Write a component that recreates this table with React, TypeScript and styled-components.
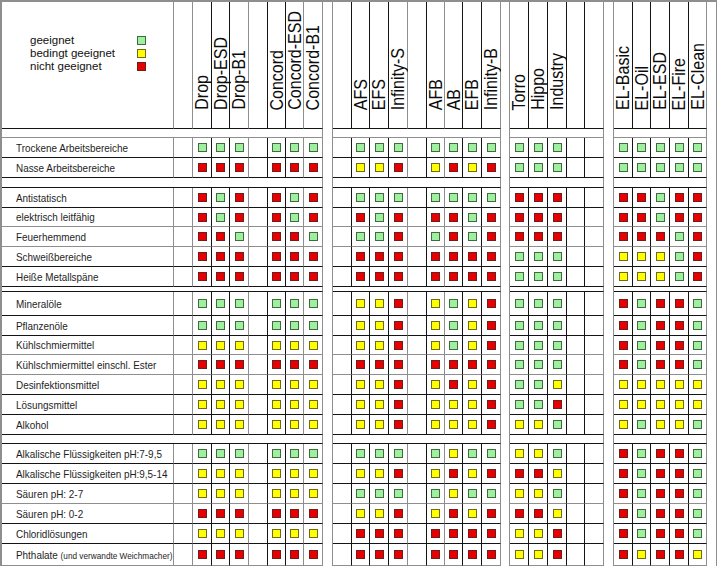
import React from 'react';
import styled, { createGlobalStyle } from 'styled-components';

type Mark = 'G' | 'Y' | 'R';

const GRAY = '#8e8e8e';
const INK = '#141414';

const MARK_STYLE: Record<Mark, { fill: string; edge: string }> = {
  G: { fill: '#9ef09e', edge: '#3f6b3f' },
  Y: { fill: '#ffff00', edge: '#6d6a1c' },
  R: { fill: '#e80000', edge: '#6b1f1f' },
};

const GlobalStyle = createGlobalStyle`
  html, body {
    margin: 0;
    padding: 0;
    background: #ffffff;
  }
  body {
    font-family: "Liberation Sans", Arial, sans-serif;
    color: ${INK};
  }
`;

const Sheet = styled.div<{ $cols: string; $rows: string }>`
  display: grid;
  grid-template-columns: ${(p) => p.$cols};
  grid-template-rows: ${(p) => p.$rows};
  width: max-content;
  border-top: 2px solid ${GRAY};
  border-left: 2px solid ${GRAY};
  background: #ffffff;
`;

const Gap = styled.div<{ $col: number }>`
  grid-column: ${(p) => p.$col};
  grid-row: 1 / -1;
  box-sizing: border-box;
  border-right: 1px solid ${GRAY};
`;

const Cell = styled.div<{ $right: string; $bottom: string }>`
  box-sizing: border-box;
  min-width: 0;
  min-height: 0;
  display: flex;
  align-items: center;
  justify-content: center;
  border-right: 1px solid ${(p) => p.$right};
  border-bottom: 1px solid ${(p) => p.$bottom};
`;

const SpacerCell = styled(Cell)<{ $span: number }>`
  grid-column: span ${(p) => p.$span};
`;

const HeaderCell = styled(Cell)`
  flex-direction: column;
  justify-content: flex-end;
  padding-bottom: 18px;
`;

const VerticalLabel = styled.span`
  writing-mode: vertical-rl;
  transform: rotate(180deg) scaleX(1.2);
  font-size: 16px;
  line-height: 16px;
  white-space: nowrap;
  color: #0c0c0c;
`;

const LegendCell = styled(Cell)`
  align-items: flex-start;
  justify-content: flex-start;
  padding: 32px 0 0 28px;
`;

const Legend = styled.div`
  display: grid;
  grid-template-columns: 107px 9px;
  grid-auto-rows: 13px;
  align-items: center;
  font-size: 11.5px;
  line-height: 13px;
  color: #111;
`;

const LegendText = styled.span`
  white-space: nowrap;
`;

const LabelCell = styled(Cell)`
  justify-content: flex-start;
  padding-left: 14px;
  font-size: 10.6px;
  color: #1e1e1e;
  white-space: nowrap;
`;

const LabelText = styled.span`
  display: inline-block;
  transform: scaleX(0.935);
  transform-origin: left center;
`;

const Aside = styled.span`
  font-size: 8.8px;
`;

const Swatch = styled.span<{ $mark: Mark }>`
  display: block;
  width: 9px;
  height: 9px;
  box-sizing: border-box;
  background: ${(p) => MARK_STYLE[p.$mark].fill};
  border: 1px solid ${(p) => MARK_STYLE[p.$mark].edge};
`;

type ColKind = 'label' | 'blank' | 'data' | 'gap';
interface Column {
  kind: ColKind;
  width: number;
  name?: string;
  soft?: boolean;
}

const columns: Column[] = [
  { kind: 'label', width: 172, soft: true },
  { kind: 'blank', width: 19, soft: true },
  { kind: 'data', width: 19, name: 'Drop' },
  { kind: 'data', width: 18, name: 'Drop-ESD' },
  { kind: 'data', width: 19, name: 'Drop-B1', soft: true },
  { kind: 'blank', width: 19 },
  { kind: 'data', width: 18, name: 'Concord' },
  { kind: 'data', width: 18, name: 'Concord-ESD', soft: true },
  { kind: 'data', width: 19, name: 'Concord-B1', soft: true },
  { kind: 'gap', width: 10 },
  { kind: 'blank', width: 19 },
  { kind: 'data', width: 18, name: 'AFS' },
  { kind: 'data', width: 19, name: 'EFS' },
  { kind: 'data', width: 19, name: 'Infinity-S', soft: true },
  { kind: 'blank', width: 19 },
  { kind: 'data', width: 18, name: 'AFB', soft: true },
  { kind: 'data', width: 18, name: 'AB' },
  { kind: 'data', width: 19, name: 'EFB' },
  { kind: 'data', width: 19, name: 'Infinity-B', soft: true },
  { kind: 'gap', width: 9 },
  { kind: 'data', width: 19, name: 'Torro' },
  { kind: 'data', width: 19, name: 'Hippo' },
  { kind: 'data', width: 19, name: 'Industry' },
  { kind: 'blank', width: 18 },
  { kind: 'blank', width: 19, soft: true },
  { kind: 'gap', width: 10 },
  { kind: 'data', width: 19, name: 'EL-Basic' },
  { kind: 'data', width: 18, name: 'EL-Oil' },
  { kind: 'data', width: 19, name: 'EL-ESD' },
  { kind: 'data', width: 19, name: 'EL-Fire' },
  { kind: 'data', width: 18, name: 'EL-Clean', soft: true },
  { kind: 'gap', width: 10 },
];

type Row =
  | { kind: 'spacer'; height: number; soft?: boolean }
  | { kind: 'data'; height: number; label: React.ReactNode; marks: string; soft?: boolean };

const rows: Row[] = [
  { kind: 'spacer', height: 9, soft: true },
  { kind: 'data', height: 20, label: 'Trockene Arbeitsbereiche', marks: 'GGG GGG GGG GGGG GGG GGGGG' },
  { kind: 'data', height: 20, label: 'Nasse Arbeitsbereiche', marks: 'RRR RRR YYR YRYR GGG GGGGG' },
  { kind: 'spacer', height: 10 },
  { kind: 'data', height: 20, label: 'Antistatisch', marks: 'RGR RGR GGG GGGG RRR RRGRR' },
  { kind: 'data', height: 19, label: 'elektrisch leitfähig', marks: 'RGR RGR RGR RRGR RRR RRGRR', soft: true },
  { kind: 'data', height: 20, label: 'Feuerhemmend', marks: 'RRG RRG GGR GRGR RRR RRRGR', soft: true },
  { kind: 'data', height: 20, label: 'Schweißbereiche', marks: 'RRR RRR RRR RRRR GGG YYYGR' },
  { kind: 'data', height: 20, label: 'Heiße Metallspäne', marks: 'RRR RRR RRR RRRR GGG YYYGR' },
  { kind: 'spacer', height: 5 },
  { kind: 'data', height: 24, label: 'Mineralöle', marks: 'GGG GGG YYR YGYR GGG RGRRG' },
  { kind: 'data', height: 20, label: 'Pflanzenöle', marks: 'GGG GGG YYR YGYR GGG RGRRG' },
  { kind: 'data', height: 19, label: 'Kühlschmiermittel', marks: 'YYY YYY YYR YGYR GGG RGRRG', soft: true },
  { kind: 'data', height: 20, label: 'Kühlschmiermittel einschl. Ester', marks: 'RRR RRR RRR RRRR GGG RGRRG', soft: true },
  { kind: 'data', height: 20, label: 'Desinfektionsmittel', marks: 'YYY YYY YYR YRYR GGY YYYYY' },
  { kind: 'data', height: 20, label: 'Lösungsmittel', marks: 'YYY YYY YYR YYYR GGR YYYYY' },
  { kind: 'data', height: 20, label: 'Alkohol', marks: 'YYY YYY YYR YYYR YYG YGYYG' },
  { kind: 'spacer', height: 9 },
  { kind: 'data', height: 20, label: 'Alkalische Flüssigkeiten pH:7-9,5', marks: 'GGG GGG GGG GYGG YYG RGRRG' },
  { kind: 'data', height: 20, label: 'Alkalische Flüssigkeiten pH:9,5-14', marks: 'YYY YYY YYR YRYR RRY RGRRG' },
  { kind: 'data', height: 20, label: 'Säuren pH: 2-7', marks: 'YYY YYY GGG GYGG YYG RGRRG', soft: true },
  { kind: 'data', height: 20, label: 'Säuren pH: 0-2', marks: 'RRR RRR YYR YRYR RRY RGRRG' },
  { kind: 'data', height: 20, label: 'Chloridlösungen', marks: 'YYY YYY RRR RRRR YYR RGRRG' },
  {
    kind: 'data',
    height: 22,
    label: (
      <>
        Phthalate <Aside>(und verwandte Weichmacher)</Aside>
      </>
    ),
    marks: 'RRR RRR RRR RRRR YYR RYRRY',
    soft: true,
  },
];

const HEADER_HEIGHT = 127;

const lineColor = (soft?: boolean) => (soft ? GRAY : INK);

const segments: { span: number }[] = (() => {
  const out: { span: number }[] = [];
  let span = 0;
  columns.forEach((c) => {
    if (c.kind === 'gap') {
      if (span > 0) out.push({ span });
      span = 0;
    } else {
      span += 1;
    }
  });
  if (span > 0) out.push({ span });
  return out;
})();

export default function App() {
  const colTemplate = columns.map((c) => `${c.width}px`).join(' ');
  const rowTemplate = [HEADER_HEIGHT, ...rows.map((r) => r.height)].map((h) => `${h}px`).join(' ');

  return (
    <>
      <GlobalStyle />
      <Sheet $cols={colTemplate} $rows={rowTemplate}>
        {columns.map((c, i) => (c.kind === 'gap' ? <Gap key={`gap-${i}`} $col={i + 1} /> : null))}

        {columns.map((c, i) => {
          if (c.kind === 'gap') return null;
          const right = lineColor(c.soft);
          if (c.kind === 'label') {
            return (
              <LegendCell key={`h-${i}`} $right={right} $bottom={INK}>
                <Legend>
                  <LegendText>geeignet</LegendText>
                  <Swatch $mark="G" />
                  <LegendText>bedingt geeignet</LegendText>
                  <Swatch $mark="Y" />
                  <LegendText>nicht geeignet</LegendText>
                  <Swatch $mark="R" />
                </Legend>
              </LegendCell>
            );
          }
          return (
            <HeaderCell key={`h-${i}`} $right={right} $bottom={INK}>
              {c.name ? <VerticalLabel>{c.name}</VerticalLabel> : null}
            </HeaderCell>
          );
        })}

        {rows.map((r, ri) => {
          const bottom = lineColor(r.soft);
          if (r.kind === 'spacer') {
            return segments.map((s, si) => (
              <SpacerCell key={`s-${ri}-${si}`} $span={s.span} $right={GRAY} $bottom={bottom} />
            ));
          }
          const marks = r.marks.replace(/\s+/g, '').split('') as Mark[];
          let k = 0;
          return columns.map((c, ci) => {
            if (c.kind === 'gap') return null;
            const right = lineColor(c.soft);
            if (c.kind === 'label') {
              return (
                <LabelCell key={`r-${ri}-${ci}`} $right={right} $bottom={bottom}>
                  <LabelText>{r.label}</LabelText>
                </LabelCell>
              );
            }
            if (c.kind === 'blank') {
              return <Cell key={`r-${ri}-${ci}`} $right={right} $bottom={bottom} />;
            }
            const m = marks[k++];
            return (
              <Cell key={`r-${ri}-${ci}`} $right={right} $bottom={bottom}>
                <Swatch $mark={m} />
              </Cell>
            );
          });
        })}
      </Sheet>
    </>
  );
}
